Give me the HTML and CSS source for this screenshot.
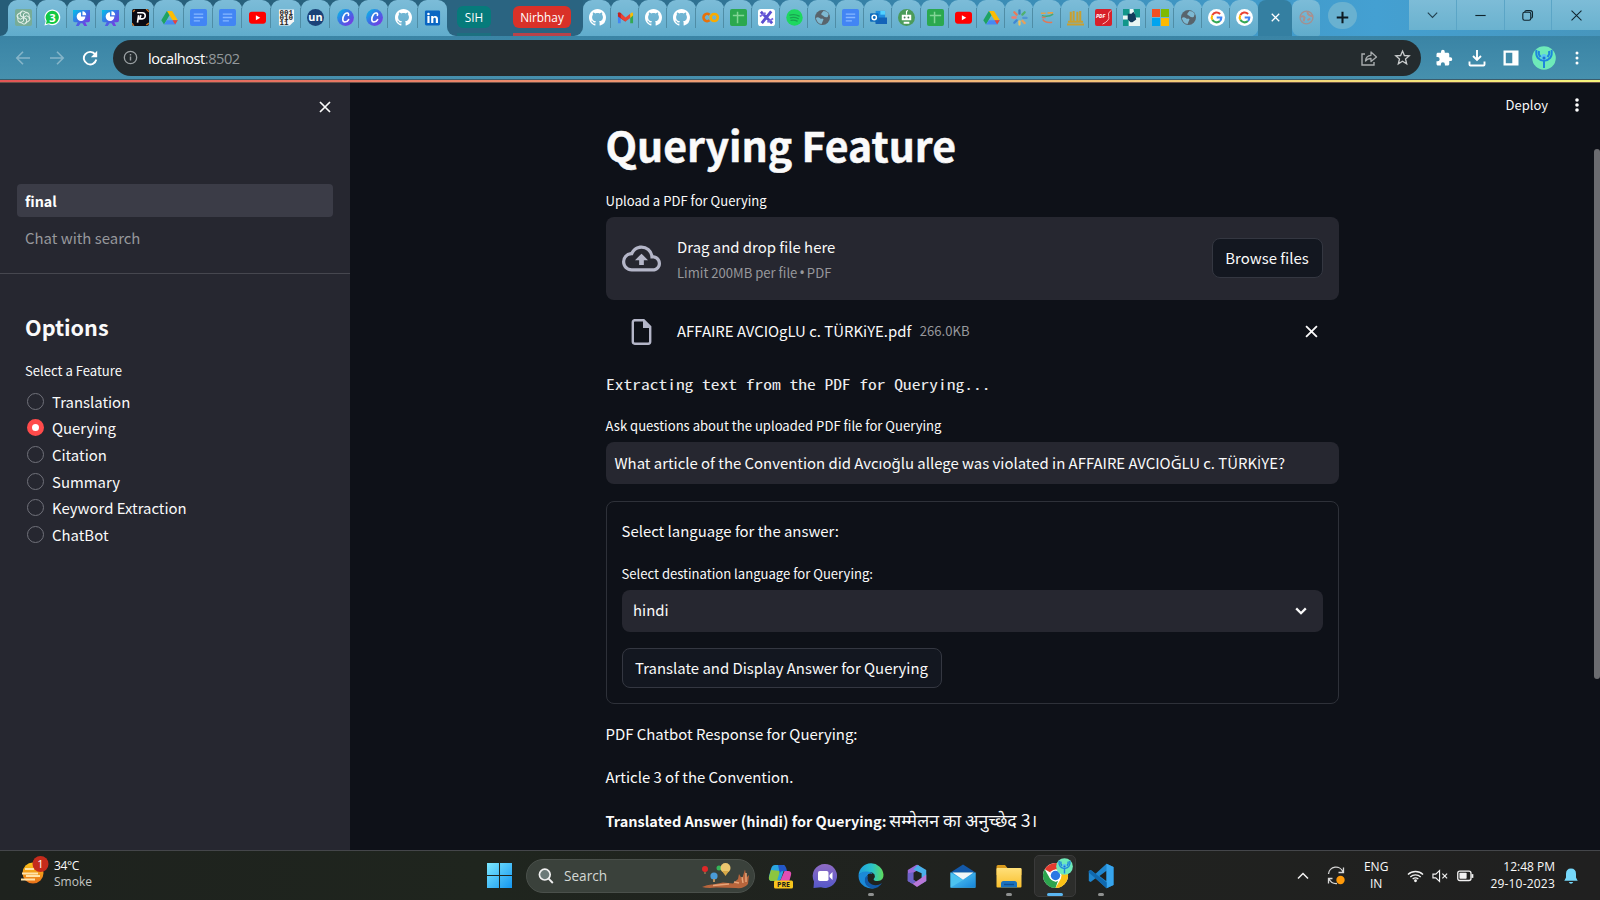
FILE: index.html
```html
<!DOCTYPE html>
<html lang="en">
<head>
<meta charset="utf-8">
<title>Querying Feature</title>
<link rel="stylesheet" href="styles.css">
</head>
<body>
<svg class="defs" aria-hidden="true">
  <defs>
    <linearGradient id="gPurple" x1="0" y1="0" x2="1" y2="1"><stop offset="0" stop-color="#00c4e8"/><stop offset=".5" stop-color="#3f6be6"/><stop offset="1" stop-color="#8a2be2"/></linearGradient>
    <linearGradient id="gWin" x1="0" y1="0" x2="1" y2="1"><stop offset="0" stop-color="#7ce8ff"/><stop offset="1" stop-color="#1496f0"/></linearGradient>
    <linearGradient id="gSun" x1="0" y1="0" x2="0" y2="1"><stop offset="0" stop-color="#fcc419"/><stop offset="1" stop-color="#e8701a"/></linearGradient>
    <linearGradient id="gChat" x1="0" y1="0" x2="0" y2="1"><stop offset="0" stop-color="#8f6bc4"/><stop offset="1" stop-color="#5558c9"/></linearGradient>
    <linearGradient id="gEdge" x1="0" y1="0" x2="1" y2="0"><stop offset="0" stop-color="#1e9fe0"/><stop offset=".55" stop-color="#2bc3c8"/><stop offset="1" stop-color="#5fdc5a"/></linearGradient>
    <linearGradient id="gFold" x1="0" y1="0" x2="0" y2="1"><stop offset="0" stop-color="#ffe07a"/><stop offset="1" stop-color="#f9bf2c"/></linearGradient>
    <linearGradient id="gMail" x1="0" y1="0" x2="1" y2="1"><stop offset="0" stop-color="#5fd4f8"/><stop offset="1" stop-color="#1583d8"/></linearGradient>
    <symbol id="gpt" viewBox="0 0 18 18"><rect width="18" height="18" rx="2" fill="#77ac97"/><g fill="none" stroke="#e3f0ea" stroke-width="1"><path id="petal" d="M9 9V5.200l3-1.700q3 0 3 3v4"/><use href="#petal" transform="rotate(60 9 9)"/><use href="#petal" transform="rotate(120 9 9)"/><use href="#petal" transform="rotate(180 9 9)"/><use href="#petal" transform="rotate(240 9 9)"/><use href="#petal" transform="rotate(300 9 9)"/></g></symbol>
    <symbol id="wa" viewBox="0 0 18 18"><path d="M.5 17.500 1.700 13A8.300 8.300 0 1 1 5 16.200z" fill="#fff"/><path d="m2 16 .9-3.200A7 7 0 1 1 5.300 15z" fill="#12c843"/><text x="9.100" y="13.400" text-anchor="middle" font-family="Open Sans, sans-serif" font-weight="700" font-size="12" fill="#fff">3</text></symbol>
    <symbol id="pie" viewBox="0 0 18 18"><path d="M0 1h18v11q0 2-2 2h-3l2 4h-3l-2-3H8l-2 3H3l2-4H2q-2 0-2-2z" fill="url(#gPurple)"/><path d="M8.500 3.400V8h4.600A4.600 4.600 0 1 1 8.500 3.400z" fill="#fff"/><path d="M10 2.400A4.400 4.400 0 0 1 14 6.600h-4z" fill="#fff"/></symbol>
    <symbol id="pp" viewBox="0 0 18 18"><rect width="18" height="18" rx="2" fill="#0a0a12"/><path d="M0 15l2 3M15 0l3 3M1 3l2-2M15 17l3-2" stroke="#d07828" stroke-width="1.400"/><path d="M5.500 4h5.300a3.200 3.200 0 0 1 0 6.500H8L9.500 6.500M7 6.500 5.800 14.500" fill="none" stroke="#fff" stroke-width="1.700"/></symbol>
    <symbol id="drive" viewBox="0 0 18 18"><path d="M6.200 2h5.600l6 10h-5.600z" fill="#fbbc04"/><path d="M6.200 2 9 6.700 3.200 16.500.3 12z" fill="#1ea362"/><path d="M6.300 12h11.500L15 16.500H3.300z" fill="#4688f4"/><path d="m17.800 12-2.800 4.500L12.200 12z" fill="#ea4335"/></symbol>
    <symbol id="doc" viewBox="0 0 18 18"><rect width="18" height="18" rx="2" fill="#4285f4"/><path d="M4 5.500h10M4 9h10M4 12.500h6.500" stroke="#86b8ff" stroke-width="1.400"/></symbol>
    <symbol id="yt" viewBox="0 0 18 18"><rect y="3" width="18" height="12.500" rx="3" fill="#f00"/><path d="m7.300 6.700 4.600 2.600-4.600 2.600z" fill="#fff"/></symbol>
    <symbol id="bits" viewBox="0 0 18 18"><path d="M1 .5h16v12.500L12.500 17.500H1z" fill="#f4f4f4"/><g font-family="Liberation Mono, monospace" font-weight="700" font-size="8" fill="#222"><text x="1.600" y="6.600">001</text><text x="1.600" y="12">010</text><text x="1.600" y="17">11</text></g></symbol>
    <symbol id="un" viewBox="0 0 18 18"><circle cx="9" cy="9" r="9" fill="#1b4278"/><text x="9" y="12.700" text-anchor="middle" font-family="Open Sans, sans-serif" font-weight="700" font-size="11.500" fill="#fff">un</text></symbol>
    <symbol id="canva" viewBox="0 0 18 18"><circle cx="9" cy="9" r="8.900" fill="url(#gPurple)"/><path d="M12 6.800c1.300-2.300-2-4-4.300-.8S5.600 13.800 8.300 13.800c1.700 0 3.200-1 4-2.600" fill="none" stroke="#fff" stroke-width="1.700" stroke-linecap="round"/></symbol>
    <symbol id="gh" viewBox="0 0 16 16"><path fill="#fff" d="M8 0C3.580 0 0 3.580 0 8c0 3.540 2.290 6.530 5.470 7.590.4.070.55-.17.55-.38 0-.19-.01-.82-.01-1.490-2.010.37-2.530-.49-2.690-.94-.09-.23-.48-.94-.82-1.130-.28-.15-.68-.52-.01-.53.63-.01 1.080.58 1.230.82.72 1.210 1.870.87 2.330.66.070-.52.28-.87.51-1.070-1.780-.2-3.640-.89-3.640-3.950 0-.87.31-1.590.82-2.150-.08-.2-.36-1.020.08-2.120 0 0 .67-.21 2.200.82.64-.18 1.320-.27 2-.27s1.360.09 2 .27c1.530-1.040 2.200-.82 2.200-.82.44 1.100.16 1.920.08 2.120.51.56.82 1.270.82 2.150 0 3.070-1.870 3.750-3.650 3.950.29.25.54.73.54 1.480 0 1.070-.01 1.930-.01 2.200 0 .21.15.46.55.38A8.010 8.010 0 0 0 16 8c0-4.420-3.580-8-8-8z"/></symbol>
    <symbol id="li" viewBox="0 0 18 18"><rect x="1" y="1.500" width="16" height="16" rx="1.500" fill="#0a66c2"/><path d="M3.600 7.500h2.300v7.300H3.600zM7.600 7.500h2.200v1c1-1.700 5-1.800 5 2v4.300h-2.300v-4c0-2-2.600-1.800-2.600 0v4H7.600z" fill="#fff"/><circle cx="4.750" cy="5.200" r="1.350" fill="#fff"/></symbol>
    <symbol id="gmail" viewBox="0 0 18 18"><path d="M1 4v11h3V7z" fill="#4285f4"/><path d="M17 4v11h-3V7z" fill="#34a853"/><path d="M1 4.500V8l8 5.500V9.500L3.800 4Q1.500 2.500 1 4.500z" fill="#c5221f"/><path d="M4 5v4.500l5 3.700 5-3.700V5L9 9z" fill="#ea4335"/><path d="M14 5v4.400L17 7V4.500Q16.500 2.500 14 5z" fill="#fbbc04"/></symbol>
    <symbol id="colab" viewBox="0 0 18 18"><g fill="none" stroke-width="2.800"><circle cx="13" cy="9" r="3.700" stroke="#f9ab00"/><path d="M8 6a3.900 3.900 0 1 0 0 6" stroke="#e8710a"/></g></symbol>
    <symbol id="sheet" viewBox="0 0 18 18"><rect width="18" height="18" rx="2" fill="#2ba84f"/><path d="M3 6.800h12M8 3v12" stroke="#82d596" stroke-width="1.600"/></symbol>
    <symbol id="xx" viewBox="0 0 18 18"><rect width="18" height="18" rx="3" fill="#fff"/><path d="M3 3 15 15M14 2.500 4 15" stroke="#5b4fd0" stroke-width="3"/><path d="M2 8 8 4M10 14l6-4" stroke="#7d6be0" stroke-width="1.800"/></symbol>
    <symbol id="spot" viewBox="0 0 18 18"><circle cx="9" cy="9" r="8.700" fill="#1ed760"/><path d="M4 6.500q5-1.500 10 1M4.600 9.400q4.500-1.200 8.500.9M5.300 12q3.500-.8 6.600.8" fill="none" stroke="#18a350" stroke-width="1.300" stroke-linecap="round"/></symbol>
    <symbol id="globe" viewBox="0 0 18 18"><circle cx="9" cy="9" r="7.900" fill="#58646c"/><path d="M2 9.500Q4 8 6 9.500t3 .5q2 1 .5 2.500L8 16q-5-.8-6-6.500zM10 2q4 0 5.500 3.500l-1 3Q11 9.500 9.500 7 7 6.500 8 4.500z" fill="#7db9d2"/></symbol>
    <symbol id="outlook" viewBox="0 0 18 18"><path d="M6 2h10v8H6z" fill="#1f8ee0"/><path d="M11 2h5v4h-5z" fill="#50d0ff"/><path d="M5 9h13v7H6z" fill="#1363b8"/><rect y="4.500" width="9" height="9" rx="1" fill="#0f6cbd"/><circle cx="4.500" cy="9" r="2.300" fill="none" stroke="#fff" stroke-width="1.500"/></symbol>
    <symbol id="bot" viewBox="0 0 18 18"><circle cx="9" cy="9" r="9" fill="#4b9b5a"/><path d="M4 6h10v6H4z M6 13.500h6v2H6z" fill="#fff"/><path d="M9 6V2.500l1.500-1" fill="none" stroke="#fff" stroke-width="1.200"/><circle cx="7" cy="9" r="1" fill="#4b7b5a"/><circle cx="11" cy="9" r="1" fill="#4b7b5a"/></symbol>
    <symbol id="pin" viewBox="0 0 18 18"><g stroke-width="2.400" stroke-linecap="round"><path d="M9 1.500v3.500" stroke="#3d7fc0"/><path d="m14.500 3.500-2.500 2.500" stroke="#4fb06e"/><path d="M16.500 9.500H13" stroke="#4f95d4"/><path d="m14.500 15-2.500-2.500" stroke="#e8a05a"/><path d="M9 13v3.500" stroke="#f2c25a"/><path d="m3.500 14.500L6 12" stroke="#4088d4"/><path d="M1.500 9H5" stroke="#f17c70"/><path d="m3.500 3.500L6 6" stroke="#ea7a5a"/></g></symbol>
    <symbol id="swirl" viewBox="0 0 18 18"><path d="M2 4.500h5M9 4h6" stroke="#e4a04c" stroke-width="1.800"/><path d="M3 7q7 2 12-1.500" fill="none" stroke="#45a878" stroke-width="1.600"/><path d="M4 11q2 4 10 3M3 9h4" fill="none" stroke="#e07858" stroke-width="1.600"/></symbol>
    <symbol id="books" viewBox="0 0 18 18"><path d="M0 16.500h18M1 13.500h16M4 3v10M7 2v11M11 3v10M14 2v11" stroke="#c9a030" stroke-width="2.200"/></symbol>
    <symbol id="pdf" viewBox="0 0 18 18"><rect width="18" height="18" rx="2" fill="#d8202a"/><text x="1" y="9.800" font-family="Open Sans, sans-serif" font-weight="700" font-style="italic" font-size="5.500" fill="#fff">PDF</text><path d="M17 1.500Q13 4 14.500 8T8 16" fill="none" stroke="#ffc9c9" stroke-width="1"/></symbol>
    <symbol id="puz" viewBox="0 0 18 18"><rect width="18" height="18" fill="#e8f6f4"/><path d="M0 0h7v7H0zM11 0h7v9h-5zM0 11h6v7H0z" fill="#12968a"/><path d="M5 5h4l2-2 2 3 1 5-4 3-2 0-3-3z" fill="#123c5c"/></symbol>
    <symbol id="ms" viewBox="0 0 18 18"><path d="M0 0h8.500v8.500H0z" fill="#f25022"/><path d="M9.500 0H18v8.500H9.500z" fill="#7fba00"/><path d="M0 9.500h8.500V18H0z" fill="#00a4ef"/><path d="M9.500 9.500H18V18H9.500z" fill="#ffb900"/></symbol>
    <symbol id="goog" viewBox="0 0 18 18"><circle cx="9" cy="9" r="9" fill="#fff"/><g fill="none" stroke-width="2.200"><path d="M12.800 5.300A5.100 5.100 0 0 0 4.600 6.500" stroke="#ea4335"/><path d="M4.600 6.500a5.200 5.200 0 0 0 0 5" stroke="#fbbc05"/><path d="M4.600 11.500a5.100 5.100 0 0 0 8 1.200" stroke="#34a853"/><path d="M12.600 12.700A5 5 0 0 0 14.100 9H9.200" stroke="#4285f4"/></g></symbol>
    <symbol id="bird" viewBox="0 0 24 24"><circle cx="12" cy="12" r="11.800" fill="#6eeab9"/><path d="M12 22v-9M4.500 4q-1 5 1.500 8 2.500 2.500 5 2.500M7 5q-1 3 1.500 6M19.500 4q1 5-1.500 8-2.500 2.500-5 2.500M17 5q1 3-1.500 6" fill="none" stroke="#1f86dc" stroke-width="2"/><circle cx="12" cy="11" r="3" fill="#58c5f0"/><circle cx="12" cy="12" r="1.500" fill="#1f70d0"/></symbol>
    <symbol id="cross" viewBox="0 0 12 12"><path d="m1 1 10 10M11 1 1 11" fill="none" stroke="currentColor" stroke-width="1.700"/></symbol>
  </defs>
</svg>

<header class="tabstrip">
  <div class="edge-start"><i></i></div>
  <div class="group group-a">
    <span class="tab"><svg><use href="#gpt"/></svg></span><span class="tab"><svg><use href="#wa"/></svg></span><span class="tab"><svg><use href="#pie"/></svg></span><span class="tab"><svg><use href="#pie"/></svg></span><span class="tab"><svg><use href="#pp"/></svg></span><span class="tab"><svg><use href="#drive"/></svg></span><span class="tab"><svg><use href="#doc"/></svg></span><span class="tab"><svg><use href="#doc"/></svg></span><span class="tab"><svg><use href="#yt"/></svg></span><span class="tab"><svg><use href="#bits"/></svg></span><span class="tab"><svg><use href="#un"/></svg></span><span class="tab"><svg><use href="#canva"/></svg></span><span class="tab"><svg><use href="#canva"/></svg></span><span class="tab"><svg><use href="#gh"/></svg></span><span class="tab"><svg><use href="#li"/></svg></span>
  </div>
  <div class="label-zone">
    <div class="labels">
      <div class="label label-sih"><span>SIH</span></div>
      <div class="label label-nir"><span>Nirbhay</span></div>
    </div>
  </div>
  <div class="group group-b">
    <span class="tab"><svg><use href="#gh"/></svg></span><span class="tab"><svg><use href="#gmail"/></svg></span><span class="tab"><svg><use href="#gh"/></svg></span><span class="tab"><svg><use href="#gh"/></svg></span><span class="tab"><svg><use href="#colab"/></svg></span><span class="tab"><svg><use href="#sheet"/></svg></span><span class="tab"><svg><use href="#xx"/></svg></span><span class="tab"><svg><use href="#spot"/></svg></span><span class="tab"><svg><use href="#globe"/></svg></span><span class="tab"><svg><use href="#doc"/></svg></span><span class="tab"><svg><use href="#outlook"/></svg></span><span class="tab"><svg><use href="#bot"/></svg></span><span class="tab"><svg><use href="#sheet"/></svg></span><span class="tab"><svg><use href="#yt"/></svg></span><span class="tab"><svg><use href="#drive"/></svg></span><span class="tab"><svg><use href="#pin"/></svg></span><span class="tab"><svg><use href="#swirl"/></svg></span><span class="tab"><svg><use href="#books"/></svg></span><span class="tab"><svg><use href="#pdf"/></svg></span><span class="tab"><svg><use href="#puz"/></svg></span><span class="tab"><svg><use href="#ms"/></svg></span><span class="tab"><svg><use href="#globe"/></svg></span><span class="tab"><svg><use href="#goog"/></svg></span><span class="tab"><svg><use href="#goog"/></svg></span>
  </div>
  <div class="active-tab"><svg><use href="#cross"/></svg></div>
  <div class="last-tab"><svg viewBox="0 0 18 18"><circle cx="9" cy="9" r="6.800" fill="none" stroke="#a39090" stroke-width="1.400"/><path d="M3 8q3-1 4 1l-1 4M10 3q0 3 3 4l3 1M10 12l3-2" fill="none" stroke="#b08f8a" stroke-width="2"/></svg></div>
  <div class="new-tab"><svg viewBox="0 0 14 14"><path d="M7 .8v12.400M.8 7h12.400" stroke="#0d1a22" stroke-width="2.200"/></svg></div>
  <div class="winctl">
    <span><svg viewBox="0 0 16 16"><path d="m3 5 5 5 5-5" fill="none" stroke="#22404f" stroke-width="1.200"/></svg></span>
    <span><svg viewBox="0 0 16 16"><path d="M2.500 8h11" stroke="#10242e" stroke-width="1.200"/></svg></span>
    <span><svg viewBox="0 0 16 16"><rect x="3" y="4.500" width="8.500" height="8.500" rx="1.800" fill="none" stroke="#10242e" stroke-width="1.200"/><path d="M5 4.500q.2-1.700 2-1.700h4q2.300 0 2.300 2.300v4q0 1.400-1.400 1.800" fill="none" stroke="#10242e" stroke-width="1.200"/></svg></span>
    <span><svg viewBox="0 0 16 16"><path d="m2.700 2.700 10.600 10.600M13.300 2.700 2.700 13.300" stroke="#10242e" stroke-width="1.100"/></svg></span>
  </div>
</header>

<nav class="toolbar">
  <svg class="nav dim" viewBox="0 0 16 16"><path d="M15 8H2M8 1.800 1.800 8 8 14.200" fill="none" stroke="currentColor" stroke-width="1.600"/></svg>
  <svg class="nav dim" viewBox="0 0 16 16"><path d="M1 8h13M8 1.800 14.200 8 8 14.200" fill="none" stroke="currentColor" stroke-width="1.600"/></svg>
  <svg class="nav" viewBox="0 0 16 16"><path d="M13.300 4.500A6.300 6.300 0 1 0 14.300 9.500" fill="none" stroke="#fff" stroke-width="1.900"/><path d="M15.200.8v6.400H8.900z" fill="#fff"/></svg>
  <div class="omnibox">
    <svg class="info" viewBox="0 0 16 16"><circle cx="8" cy="8" r="6.600" fill="none" stroke="#9aa0a3" stroke-width="1.400"/><path d="M8 7v4.300M8 4.300v1.500" stroke="#9aa0a3" stroke-width="1.500"/></svg>
    <span class="url">localhost<i>:8502</i></span>
    <svg class="share" viewBox="0 0 18 18"><path d="M5 5H2v11h12v-3" fill="none" stroke="#a9adaf" stroke-width="1.400"/><path d="M5.500 12Q6 6.500 11 6.300V3l5.500 5-5.500 4.500V9.500Q7.500 9.300 5.500 12z" fill="none" stroke="#a9adaf" stroke-width="1.300" stroke-linejoin="round"/></svg>
    <svg class="star" viewBox="0 0 18 18"><path d="m9 2.200 2 4.700 5.100.4-3.900 3.300 1.200 5L9 12.900l-4.400 2.700 1.200-5L1.900 7.300 7 6.900z" fill="none" stroke="#c8cbcc" stroke-width="1.400"/></svg>
  </div>
  <div class="actions">
    <svg viewBox="0 0 24 24"><path d="M20.500 11H19V7c0-1.100-.9-2-2-2h-4V3.500a2.500 2.500 0 0 0-5 0V5H4c-1.100 0-2 .9-2 2v3.800h1.500a2.700 2.700 0 0 1 0 5.400H2V20c0 1.100.9 2 2 2h3.800v-1.500a2.700 2.700 0 0 1 5.400 0V22H17c1.100 0 2-.9 2-2v-4h1.500a2.500 2.500 0 0 0 0-5z" fill="#fff"/></svg>
    <svg viewBox="0 0 18 18"><path d="M9 1v9.500M5 7l4 4 4-4" fill="none" stroke="#fff" stroke-width="1.900"/><path d="M1.500 12.500v3q0 1 1 1h13q1 0 1-1v-3" fill="none" stroke="#fff" stroke-width="1.900"/></svg>
    <svg viewBox="0 0 18 18"><path d="M1.500 1.500h15v15h-15zM3.800 3.800v10.400h6.500V3.800z" fill="#fff" fill-rule="evenodd"/></svg>
    <svg class="avatar"><use href="#bird"/></svg>
    <svg class="kebab" viewBox="0 0 4 14"><circle cx="2" cy="2" r="1.500" fill="#fff"/><circle cx="2" cy="7" r="1.500" fill="#fff"/><circle cx="2" cy="12" r="1.500" fill="#fff"/></svg>
  </div>
</nav>
<div class="rainbow"></div>

<div class="app">
  <aside class="sidebar">
    <div class="close"><svg><use href="#cross"/></svg></div>
    <div class="page current">final</div>
    <div class="page">Chat with search</div>
    <hr>
    <h2>Options</h2>
    <p class="small feature">Select a Feature</p>
    <ul class="radios">
      <li><i></i>Translation</li>
      <li class="on"><i></i>Querying</li>
      <li><i></i>Citation</li>
      <li><i></i>Summary</li>
      <li><i></i>Keyword Extraction</li>
      <li><i></i>ChatBot</li>
    </ul>
  </aside>

  <main class="main">
    <div class="content">
      <h1>Querying Feature</h1>
      <p class="small">Upload a PDF for Querying</p>
      <section class="dropzone">
        <svg class="cloud" viewBox="0 0 24 24"><path fill="#b4b6c8" d="M19.350 10.040A7.490 7.490 0 0 0 12 4C9.110 4 6.600 5.640 5.350 8.040A5.994 5.994 0 0 0 0 14c0 3.310 2.690 6 6 6h13c2.760 0 5-2.240 5-5 0-2.640-2.050-4.780-4.650-4.960zM19 18H6c-2.210 0-4-1.790-4-4s1.790-4 4-4h.71C7.370 7.690 9.480 6 12 6c3.040 0 5.500 2.460 5.500 5.500v.5H19c1.660 0 3 1.340 3 3s-1.340 3-3 3zM8 13h2.550v3h2.900v-3H16l-4-4z"/></svg>
        <div class="drop-text">
          <p>Drag and drop file here</p>
          <p class="limit">Limit 200MB per file <span class="bullet">•</span> PDF</p>
        </div>
        <button class="btn browse">Browse files</button>
      </section>
      <div class="file">
        <svg class="file-icon" viewBox="0 0 20 26"><path d="M2.500 1.300h9.700l6.500 6.500v15q0 1.900-1.900 1.900H3.200q-1.900 0-1.900-1.900V3.200q0-1.900 1.900-1.900z" fill="none" stroke="#b4b6c8" stroke-width="2.400"/><path d="M11.500 1v8H19z" fill="#b4b6c8"/></svg>
        <span class="name">AFFAIRE AVCIOgLU c. TÜRKiYE.pdf</span>
        <span class="size">266.0KB</span>
        <svg class="remove"><use href="#cross"/></svg>
      </div>
      <p class="mono">Extracting text from the PDF for Querying...</p>
      <p class="small ask">Ask questions about the uploaded PDF file for Querying</p>
      <div class="input">What article of the Convention did Avcıoğlu allege was violated in AFFAIRE AVCIOĞLU c. TÜRK<span class="idot">&#304;</span>YE?</div>
      <form class="form">
        <p class="lang">Select language for the answer:</p>
        <p class="small dest">Select destination language for Querying:</p>
        <div class="select"><span>hindi</span><svg viewBox="0 0 12 8"><path d="m1.200 1.400 4.800 4.800 4.800-4.800" fill="none" stroke="#fafafa" stroke-width="2.300"/></svg></div>
        <button type="button" class="btn translate">Translate and Display Answer for Querying</button>
      </form>
      <p class="out">PDF Chatbot Response for Querying:</p>
      <p class="out">Article 3 of the Convention.</p>
      <p class="out translated"><b>Translated Answer (hindi) for Querying:</b><span class="hindi">सम्मेलन का अनुच्छेद 3।</span></p>
    </div>
    <div class="top-right"><span>Deploy</span><svg viewBox="0 0 4 14"><circle cx="2" cy="2" r="1.800" fill="#fff"/><circle cx="2" cy="7" r="1.800" fill="#fff"/><circle cx="2" cy="12" r="1.800" fill="#fff"/></svg></div>
    <div class="scroll"></div>
  </main>
</div>

<footer class="taskbar">
  <div class="weather">
    <svg viewBox="0 0 28 28"><circle cx="12" cy="17" r="10.500" fill="url(#gSun)"/><path d="M4 13h9M1 17.500h16M5 20h14M0 23.500h14" stroke="#ffe3a8" stroke-width="1.800"/><circle cx="19.500" cy="8" r="8" fill="#c42b1c"/><text x="19.500" y="12" text-anchor="middle" font-family="Open Sans, sans-serif" font-size="11" fill="#fff">1</text></svg>
    <div><p class="temp">34°C</p><p class="smoke">Smoke</p></div>
  </div>
  <div class="dock">
    <svg class="win" viewBox="0 0 24 24"><path d="M0 0h11.500v11.500H0zM12.500 0H24v11.500H12.500zM0 12.500h11.500V24H0zM12.500 12.500H24V24H12.500z" fill="url(#gWin)"/></svg>
    <div class="search">
      <svg class="lens" viewBox="0 0 16 16"><circle cx="6.800" cy="6.600" r="5.400" fill="#6b7a78" stroke="#f0f0f0" stroke-width="1.700"/><path d="m10.600 10.700 4.200 4.300" stroke="#f0f0f0" stroke-width="1.900"/></svg>
      <span>Search</span>
      <svg class="balloons" viewBox="0 0 50 28"><path d="M1 25q6-3 11-2.500l10-2 10 1 5-4.500 1-5 3 5 3-9.500 1.500 8L48 13l-1 9q-4 5-12 4l-20-.5q-8 1-14-.5z" fill="#b8653c"/><path d="M12 23.500 28 22M33 20l5 1M41 15l1 6M45 11v9" stroke="#e7a478" stroke-width="1.500"/><circle cx="4" cy="7" r="3" fill="#e02828"/><circle cx="18" cy="6" r="2.500" fill="#35b558"/><circle cx="13" cy="14" r="3.600" fill="#4a9bd8"/><circle cx="24.500" cy="6" r="5" fill="#ecc66e"/><path d="m21 9 3.500 5L28 9z" fill="#d8a848"/><path d="M12 17h2v3h-2zM3.500 10h1v2h-1z" fill="#b98f5c"/></svg>
    </div>
    <span class="ico copilot"><svg viewBox="0 0 26 26"><path d="M7 2h8q2.500 0 1.800 2.500L13 16q-.8 2-3 2H4q-4 0-3-5l2-7q1-4 4-4z" fill="#2aa5e0"/><path d="M3 7 1 14q-.8 4 3 4h5l3-10z" fill="#8cc63f"/><path d="M16.500 8H20q4 0 3 4l-2 7H9q3 0 4-3z" fill="#e14fb4"/><path d="M10 2h5q3 0 4 6h-4q-3 0-3 3z" fill="#2357c8"/><rect x="6" y="17.500" width="19" height="8" rx="1.500" fill="#f8c51c"/><text x="15.500" y="24" text-anchor="middle" font-family="Open Sans, sans-serif" font-size="7" font-weight="700" fill="#1c1c1c">PRE</text></svg></span>
    <span class="ico teams"><svg viewBox="0 0 26 26"><path d="M13 1a12 12 0 1 1-4 23.300L1.500 25l.5-6.500A12 12 0 0 1 13 1z" fill="url(#gChat)"/><rect x="6" y="8" width="10.500" height="10" rx="1.800" fill="#fff"/><path d="m17.500 12 3-3v8l-3-3z" fill="#fff"/></svg></span>
    <span class="ico running"><svg viewBox="0 0 26 26"><path d="M.6 12A12.500 12.500 0 0 1 25.500 11.500q.3 6.500-5.800 6.500-4.500 0-4-2 2-2 .8-4.500Q14.500 8.500 11 9q-8 0-10.400 3z" fill="url(#gEdge)"/><path d="M.6 12Q3 8 9 8.500q4.500 0 5.500 2.500-4-1.500-5.500 2-1 8 7.500 12-4.500 1.500-10-1.500Q0 19.500.6 12z" fill="#1b8ad8"/><path d="M10 12.500q-2 6 4 9 5 2 10-1.500Q20.500 25.500 14 25.500 5.500 23 7 15q1-2.500 3-2.500z" fill="#1159a8"/></svg></span>
    <span class="ico office"><svg viewBox="0 0 26 26"><path d="M12 1 3 6.500v12L8 21.500l4-2.500-3-2V9.500l6-3.500V1.500Q13.500.3 12 1z" fill="#9a6ad8"/><path d="m14 1 9 5.500v12l-5 3V10L9 6z" fill="#4ab0ea"/><path d="m8 21.500 5 3.500 10-6.500v-7l-5 3.500-6 4z" fill="#b877d8"/><path d="M3 10v8.500L8 21.500l4-2.500-3-2V9z" fill="#6d63c8"/></svg></span>
    <span class="ico mail"><svg viewBox="0 0 26 26"><path d="m.5 9.500 12.500-8 12.500 8z" fill="#1358a8"/><path d="M.5 9.500h25v15H.5z" fill="#2f9fe4"/><path d="M.5 9.500 25.500 24.500H.5z" fill="#4cc2f0"/><path d="M25.500 9.500v15H.5z" fill="url(#gMail)"/><path d="M2.500 9.500h21L13 16.800z" fill="#f2f6f8"/></svg></span>
    <span class="ico running"><svg viewBox="0 0 26 26"><path d="M.5 3.500q0-1.500 1.500-1.500h7l2.500 3H24q1.500 0 1.500 1.500V12H.5z" fill="#d99a1c"/><rect x=".5" y="5" width="25" height="19.500" rx="1" fill="url(#gFold)"/><path d="M5 24.500v-4q0-2.500 2.500-2.500h11q2.500 0 2.500 2.500v4z" fill="#1b72bd"/><path d="M8 21.500h10" stroke="#0f4f92" stroke-width="1.400"/></svg></span>
    <div class="chrome">
      <svg class="ring" viewBox="0 0 27 27"><circle cx="13.500" cy="13.500" r="12.500" fill="#fff"/><path d="M13.500 13.500 2.700 7.200A12.500 12.500 0 0 1 24.300 7.200H13.500z" fill="#e33b2e"/><path d="M13.500 7.200h10.800A12.500 12.500 0 0 1 13.500 26l5.400-9.400z" fill="#fbc116"/><path d="M2.700 7.200 8 16.600l5.500 3.200 2.500-1L13.500 26A12.500 12.500 0 0 1 2.700 7.200z" fill="#2da44e"/><circle cx="13.500" cy="13.500" r="6" fill="#fff"/><circle cx="13.500" cy="13.500" r="4.700" fill="#2a78e4"/></svg>
      <svg class="profile"><use href="#bird"/></svg>
    </div>
    <span class="ico running"><svg viewBox="0 0 26 26"><path d="M18.500.8 25.500 4v18l-7 3.200L7.500 15.300 2.700 19 .8 18V8l1.900-1 4.800 3.700zM18.500 7.800 11.500 13l7 5.200z" fill="#1f86cf" fill-rule="evenodd"/><path d="m18.500.8 7 3.200v18l-7 3.200z" fill="#37a5ee"/><path d="m.8 8 1.900-1 16 12.500v5.700L.8 9.500z" fill="#1068ae"/></svg></span>
  </div>
  <div class="tray">
    <svg class="chev" viewBox="0 0 12 8"><path d="m1 6.500 5-5 5 5" fill="none" stroke="#f2f2f2" stroke-width="1.500"/></svg>
    <svg class="sync" viewBox="0 0 18 20"><path d="M1.500 8A7.500 7.500 0 0 1 16 6M16.500 1.500V6.500h-5M5.500 12.500h-4v5M2 13q2.500 5 8 4.500" fill="none" stroke="#d8d8d8" stroke-width="1.300"/><circle cx="13.500" cy="14" r="4.200" fill="#ff9a0a"/></svg>
    <div class="lang-ind"><p>ENG</p><p>IN</p></div>
    <svg class="wifi" viewBox="0 0 18 14"><path d="M1 5.500a11.500 11.500 0 0 1 16 0M3.500 8a8 8 0 0 1 11 0M6 10.300a4.500 4.500 0 0 1 6 0" fill="none" stroke="#f2f2f2" stroke-width="1.400"/><circle cx="9" cy="12" r="1.500" fill="#f2f2f2"/></svg>
    <svg class="vol" viewBox="0 0 18 14"><path d="M1 5h3l4-3.700v11.400L4 9H1z" fill="none" stroke="#f2f2f2" stroke-width="1.200"/><path d="m11 4.500 5 5M16 4.500l-5 5" stroke="#f2f2f2" stroke-width="1.200"/></svg>
    <svg class="bat" viewBox="0 0 18 14"><rect x=".8" y="1.800" width="14" height="10" rx="2.200" fill="none" stroke="#f2f2f2" stroke-width="1.400"/><rect x="2.600" y="3.600" width="7.600" height="6.400" rx=".8" fill="#f2f2f2"/><path d="M16.300 5v4" stroke="#f2f2f2" stroke-width="2"/></svg>
    <div class="clock"><p>12:48 PM</p><p class="date">29-10-2023</p></div>
    <svg class="bell" viewBox="0 0 14 16"><path d="M7 .5q5 0 5 5.500v3.500l1.700 3.300H.3L2 9.500V6Q2 .5 7 .5zM4.800 14h4.400Q8.500 15.800 7 15.800T4.800 14z" fill="#76d8fa"/></svg>
  </div>
</footer>
</body>
</html>
```
FILE: styles.css
```css
* { box-sizing: border-box; margin: 0; padding: 0; }
body { width: 1600px; height: 900px; overflow: hidden; background: #0e1118; color: #fafafa; font-family: "Noto Sans CJK SC", "Noto Sans", sans-serif; font-size: 14.920px; }
svg { display: block; flex: none; }
.defs { position: absolute; width: 0; height: 0; }
p, li, span, b { white-space: nowrap; }

/* Browser tab strip */
.tabstrip { display: flex; height: 36px; background: linear-gradient(90deg, #265d78 0, #2a6582 35%, #3a8ab2 60%, #44a0d2 86%, #4796bd 100%); font-family: "Open Sans", "Noto Sans", sans-serif; }
.edge-start { width: 8px; background: linear-gradient(#0000 26px, #62aecd 26px); }
.edge-start i { display: block; height: 36px; background: #265d78; border-bottom-right-radius: 8px; }
.group { display: flex; height: 36px; background: linear-gradient(#0000 12px, #72b6d3 12px, #60accc); overflow: hidden; }
.group-a { width: 439px; }
.group-b { width: 675px; border-bottom-right-radius: 8px; }
.tab { flex: 1; display: flex; align-items: center; justify-content: center; border-radius: 9px 9px 0 0; background: linear-gradient(#4f8da6, #4f8da6) right 8px / 1px 20px no-repeat, linear-gradient(#7cbcd8, #60accc); }
.tab:last-child { background: linear-gradient(#7cbcd8, #60accc); }
.tab svg { width: 17px; height: 17px; margin: -1px 0 0 1px; }
.label-zone { width: 136px; background: linear-gradient(#0000 26px, #62aecd 26px); }
.labels { height: 36px; display: flex; padding: 6px 0 0 10px; gap: 22px; font-size: 11.800px; background: #2a6481; border-radius: 0 0 9px 9px; }
.label { height: 30px; color: #fff; text-align: center; border-bottom: 3px solid; }
.label span { display: block; height: 22px; line-height: 22px; border-radius: 6px; }
.label-sih { width: 34px; border-color: #1c7080; }
.label-sih span { background: #067b7b; }
.label-nir { width: 58px; border-color: #b8434a; }
.label-nir span { background: #d93128; }
.active-tab { width: 34px; display: flex; align-items: center; justify-content: center; background: #347fa1; border-radius: 8px 8px 0 0; color: #fff; }
.active-tab svg { width: 9px; height: 9px; margin-top: -1px; }
.last-tab { width: 28px; height: 36px; display: flex; align-items: center; justify-content: center; background: linear-gradient(#7cbcd8, #60accc); border-radius: 8px 8px 2px 8px; }
.last-tab svg { width: 17px; height: 17px; margin-top: -1px; }
.new-tab { width: 29px; height: 27px; margin: 2px 52px 0 8px; display: flex; align-items: center; justify-content: center; border-radius: 14px; background: #69b1d0; }
.new-tab svg { width: 13px; height: 13px; margin-top: 3px; }
.winctl { display: grid; grid-template-columns: repeat(4, 1fr); flex: 1; height: 30px; background: linear-gradient(#7dbcd7, #6ab2cf); }
.winctl span { display: flex; align-items: center; justify-content: center; border-right: 1px solid #5ba5c6; }
.winctl span:last-child { border-right: 0; }
.winctl svg { width: 15px; height: 15px; }

/* Address bar row */
.toolbar { display: flex; align-items: center; height: 43px; background: linear-gradient(#3a84a5, #4690ae); padding: 0 0 0 15px; }
.nav { width: 16px; height: 16px; margin-right: 17.500px; }
.dim { color: #86b5c9; }
.omnibox { display: flex; align-items: center; width: 1308px; height: 36px; margin-left: -2.500px; padding: 0 10px; border-radius: 18px; background: #242b2e; font-family: "Open Sans", "Noto Sans", sans-serif; font-size: 14.600px; }
.info { width: 15px; height: 15px; margin-right: 10px; }
.url { color: #fff; flex: 1; letter-spacing: -.48px; }
.url i { font-style: normal; color: #92989b; }
.share { width: 18px; height: 18px; margin-right: 16px; }
.star { width: 17px; height: 17px; }
.actions { display: flex; align-items: center; padding-left: 13.500px; gap: 15.500px; }
.actions svg { width: 18px; height: 18px; }
.actions .avatar { width: 24px; height: 24px; margin-left: -3px; }
.actions .kebab { width: 4px; height: 14px; margin-left: 3.500px; }
.rainbow { height: 4px; border-top: 1px solid #3a5c6c; border-bottom: 1px solid #6b5148; background: linear-gradient(90deg, #e25555, #f0a878 50%, #f6f57c); }

/* Sidebar */
.app { display: flex; height: 767px; }
.sidebar { width: 350px; background: #262730; }
.close { display: flex; justify-content: flex-end; padding: 18px 19px 0 0; height: 101px; }
.close svg { width: 12px; height: 12px; }
.page { margin: 0 17px 4px; height: 33px; line-height: 33px; padding-left: 8px; border-radius: 4px; color: #97989c; }
.current { background: #3b3c47; color: #fff; font-weight: 700; font-size: 14.300px; }
.sidebar hr { border: 0; border-top: 1px solid #46474f; margin-top: 19px; }
.sidebar h2 { font-size: 21.600px; line-height: 32px; font-weight: 700; margin: 37px 0 0 25px; }
.small { font-size: 13.080px; line-height: 22px; height: 22px; }
.feature { margin: 17px 0 0 25px; }
.radios { list-style: none; margin: 6px 0 0 27px; }
.radios li { display: flex; align-items: center; height: 26.650px; }
.radios i { width: 17px; height: 17px; margin-right: 8px; border: 1.500px solid #70717a; border-radius: 50%; }
.radios .on i { border: 5.500px solid #ff4b4b; background: #fff; }

/* Main column */
.main { position: relative; flex: 1; padding: 32.500px 0 0 255.500px; background: #0e1118; }
.content { width: 733.500px; }
.content h1 { font-size: 41px; line-height: 56px; font-weight: 700; margin-bottom: 18.500px; -webkit-text-stroke: .5px #fafafa; }
.dropzone { display: flex; align-items: center; height: 82.500px; margin-top: 5px; padding: 0 16.500px 0 16px; border-radius: 8px; background: #262730; }
.cloud { width: 39px; height: 39px; margin-right: 16.500px; }
.drop-text { flex: 1; line-height: 25px; padding-top: 4px; }
.drop-text .limit { margin-top: 1px; font-size: 13.080px; line-height: 26px; color: #97989c; }
.bullet { font-family: "Noto Sans", sans-serif; font-size: 15px; line-height: 1; margin: 0 -1px; }
.btn { height: 40px; border: 1px solid #343741; border-radius: 8px; background: #131720; color: #fafafa; font: inherit; white-space: nowrap; }
.browse { width: 111px; padding-bottom: 1px; margin-top: -1px; }
.file { display: flex; align-items: center; height: 40px; margin-top: 12px; padding: 0 21px 0 25px; }
.file-icon { width: 21px; height: 26px; margin-right: 25.500px; }
.name, .size { margin-top: -2px; }
.size { margin-left: 8.500px; flex: 1; font-size: 13.080px; color: #97989c; }
.remove { width: 13px; height: 13px; }
.mono { width: 308px; font-family: "Noto Sans Mono CJK SC", "DejaVu Sans Mono", monospace; font-size: 14px; line-height: 24px; margin-top: 20px; color: #ececee; transform: scaleX(1.248); transform-origin: left; }
.ask { margin-top: 19px; }
.input { height: 41.500px; line-height: 41px; margin-top: 5.500px; padding-left: 9px; border-radius: 8px; background: #262730; white-space: nowrap; }
.idot { font-family: "Open Sans", "Noto Sans", sans-serif; }
.form { height: 203px; margin: 17px 0 18px; padding: 17px 15.500px 0 15px; border: 1px solid #2e3139; border-radius: 8px; }
.lang { line-height: 24px; }
.dest { margin-top: 20px; }
.select { display: flex; align-items: center; justify-content: space-between; height: 42px; margin: 5px 0 16px; padding: 0 15.500px 0 11.500px; border-radius: 8px; background: #262730; }
.select span { margin-top: -2px; }
.select svg { width: 12px; height: 8px; }
.translate { width: 320px; }
.out { height: 24px; line-height: 24px; margin-bottom: 19px; }
.translated { margin-top: 20px; }
.out b { font-size: 14.500px; }
.hindi { margin-left: 3px; font-size: 17.700px; line-height: 20px; }
.top-right { position: absolute; top: 10px; right: 21px; display: flex; align-items: center; gap: 27px; height: 22px; font-size: 13px; }
.top-right svg { width: 4px; height: 14px; margin-top: 2px; }
.scroll { position: absolute; right: 0; top: 66px; width: 6px; height: 530px; border-radius: 3px; background: #6b6c70; }

/* Taskbar */
.taskbar { display: flex; height: 50px; border-top: 1px solid #44464a; background: linear-gradient(90deg, #1e221e, #1f251e 30%, #20221f 60%, #202020); font-family: "Open Sans", "Noto Sans", sans-serif; font-size: 12px; }
.weather { display: flex; width: 487px; padding: 5px 0 0 21px; gap: 5px; line-height: 16.500px; }
.weather svg { width: 28px; height: 28px; }
.temp { margin-top: 1.500px; letter-spacing: -.35px; }
.smoke { color: #c4c6c4; }
.dock { display: flex; align-items: center; flex: 1; }
.win { width: 25px; height: 25px; }
.search { display: flex; align-items: center; width: 229px; height: 34px; margin: 0 12.500px 0 14px; padding: 0 3px 0 11px; border: 1px solid #4a504b; border-radius: 17px; background: #3a413b; color: #d4d8d5; font-size: 13.600px; }
.search span { flex: 1; margin-left: 10px; }
.lens { width: 16px; height: 16px; }
.balloons { width: 50px; height: 28px; }
.ico { position: relative; width: 26px; height: 26px; margin-right: 20px; }
.ico svg { width: 26px; height: 26px; }
.copilot { margin-right: 18.500px; }
.office svg { width: 24px; height: 24px; margin: 1px; }
.mail { margin-right: 19.500px; }
.running::after { content: ""; position: absolute; left: 10px; top: 30px; width: 6px; height: 3px; border-radius: 2px; background: #8f9190; }
.chrome { position: relative; width: 42px; height: 42px; margin: 0 11.500px 0 -7.500px; border: 1px solid #3a3a3a; border-radius: 5px; background: #2c2d2b; display: flex; align-items: center; justify-content: center; }
.chrome::after { content: ""; position: absolute; left: 12px; bottom: 0; width: 16px; height: 3px; border-radius: 2px; background: #5bb6f0; }
.ring { width: 27px; height: 27px; }
.profile { position: absolute; left: 21px; top: 2px; width: 17px; height: 17px; }
.tray { display: flex; align-items: center; padding-right: 22px; line-height: 16.500px; text-align: center; }
.chev { width: 12px; height: 8px; margin-right: 18px; }
.sync { width: 18px; height: 20px; margin-right: 19px; }
.wifi, .vol, .bat { width: 17px; height: 14px; }
.wifi { margin-left: 19px; }
.vol, .bat { margin-left: 8px; }
.clock { margin-left: 16px; text-align: right; }
.date { letter-spacing: .2px; }
.bell { width: 14px; height: 16px; margin-left: 9px; }
```
